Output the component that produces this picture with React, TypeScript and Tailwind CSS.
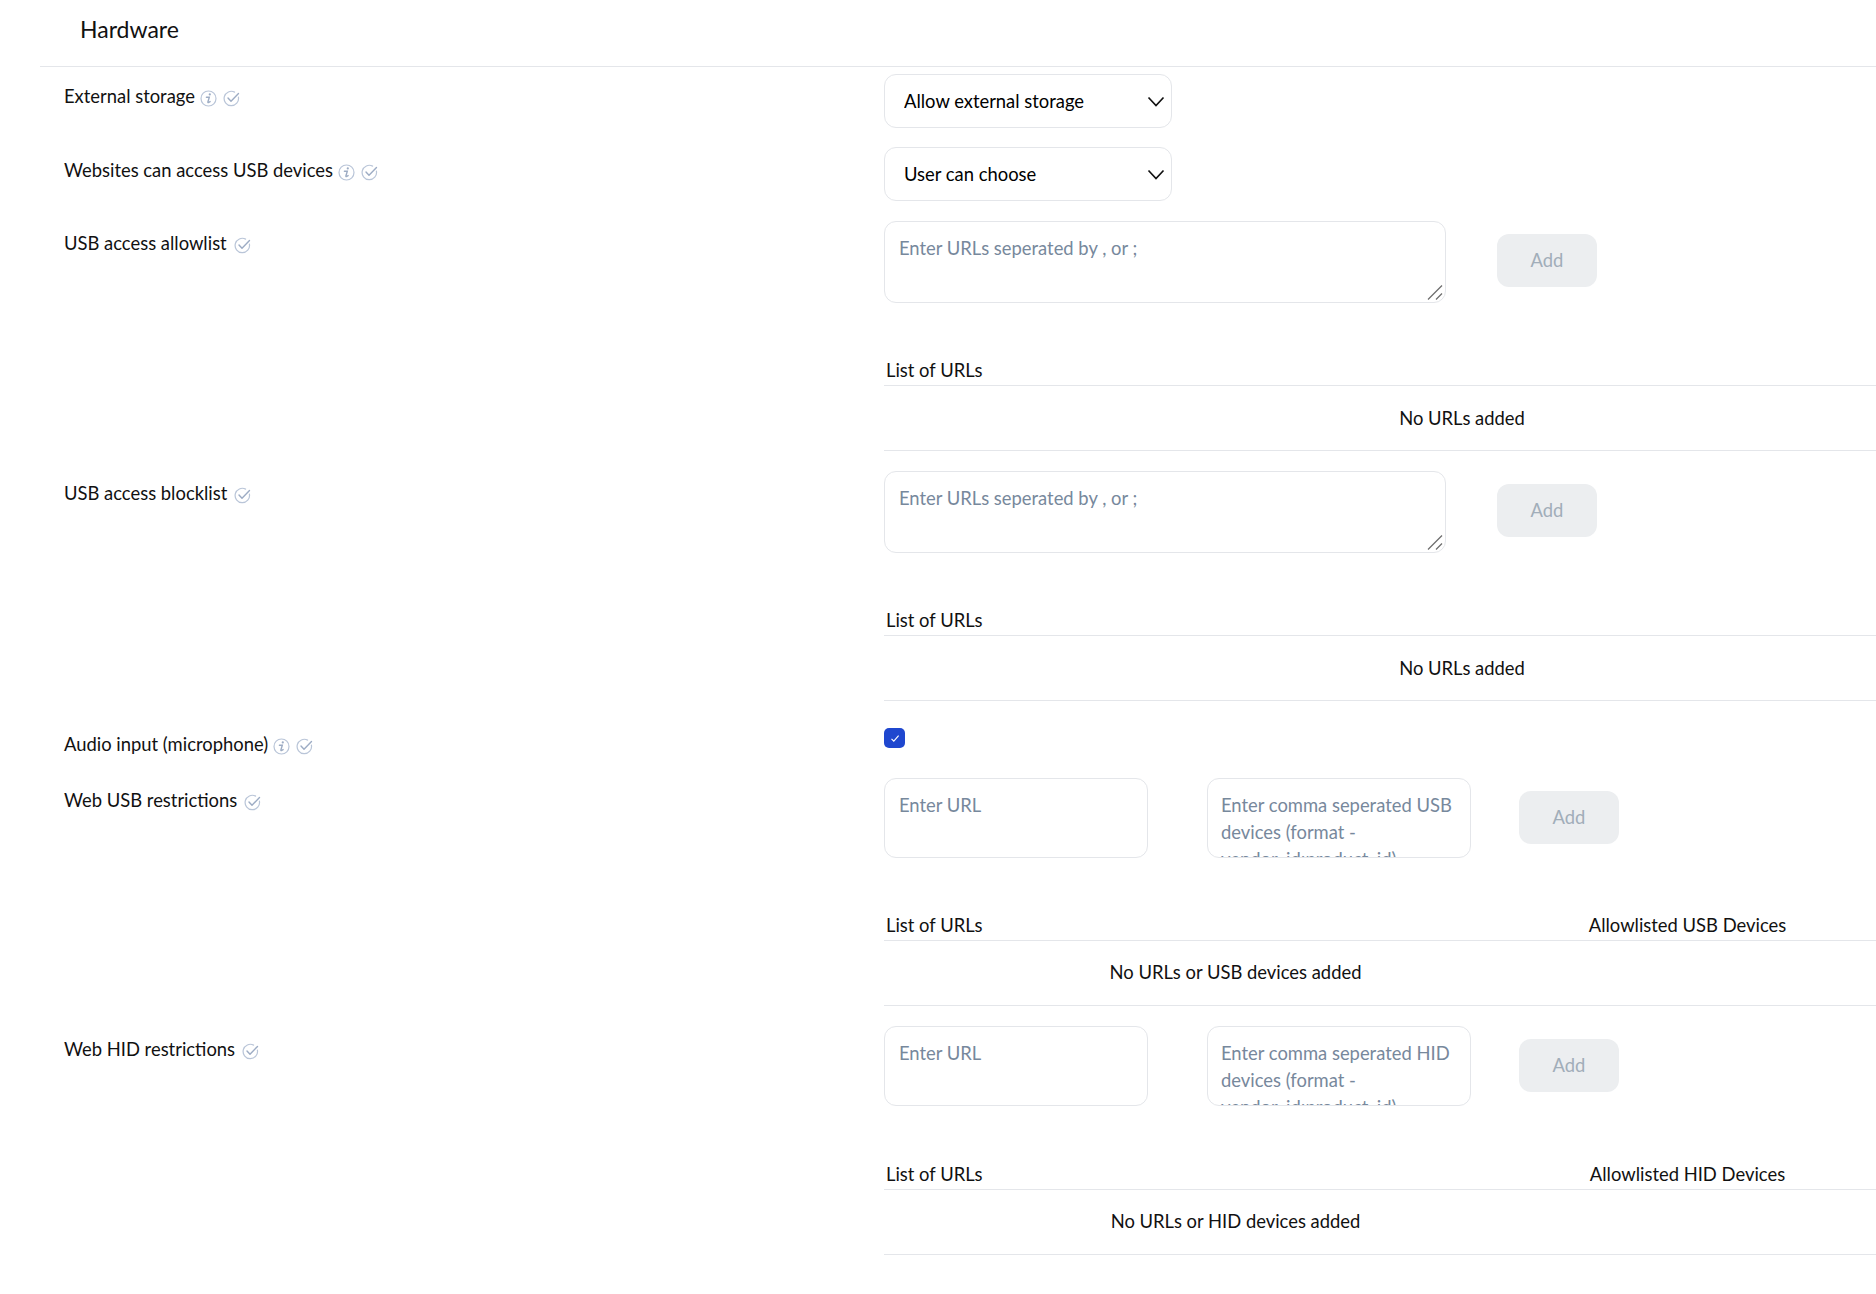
const inputCls =
  'block border border-[#e4e6ea] rounded-xl bg-white py-[13px] text-[18.4px] leading-[27px] text-black placeholder:text-[#77889c] outline-none resize-none';

function InfoIcon() {
  return (
    <svg width="17" height="17" viewBox="0 0 17 17" fill="none" className="inline-block shrink-0">
      <circle cx="8.5" cy="8.5" r="7.5" stroke="#b9c5d8" strokeWidth="1.2" />
      <circle cx="9.8" cy="4.4" r="1.1" fill="#9dacc4" />
      <path d="M6.4 7.2h2.9l-1.4 4.8c-.1.6.3.8.8.5l1.4-.9" stroke="#9dacc4" strokeWidth="1.4" strokeLinecap="round" />
    </svg>
  );
}

function CheckIcon() {
  return (
    <svg width="17" height="17" viewBox="0 0 17 17" fill="none" className="inline-block shrink-0">
      <path d="M15.4 7.2A7.2 7.2 0 1 1 11.6 2.1" stroke="#b9c5d8" strokeWidth="1.2" strokeLinecap="round" />
      <path d="M5 8l3 3.2 7.5-7.7" stroke="#9dacc4" strokeWidth="1.4" strokeLinecap="round" strokeLinejoin="round" />
    </svg>
  );
}

function Label({ text, info, className }: { text: string; info?: boolean; className: string }) {
  return (
    <div className={`w-[884px] shrink-0 pl-16 ${className}`}>
      <div className="flex items-center text-[18.4px] leading-[27px] text-[#111]">
        <span>{text}</span>
        {info && <span className="ml-[5px] flex items-center pt-[3px]"><InfoIcon /></span>}
        <span className={`${info ? 'ml-[6px]' : 'ml-[7px]'} flex items-center pt-[3px]`}><CheckIcon /></span>
      </div>
    </div>
  );
}

function Select({ value }: { value: string }) {
  return (
    <div className="relative w-[288px] h-[54px]">
      <select className="appearance-none w-full h-full border border-[#e4e6ea] rounded-xl bg-white pl-[19px] pt-[1px] text-[18.4px] text-black outline-none" defaultValue={value}>
        <option>{value}</option>
      </select>
      <svg width="18" height="11" viewBox="0 0 18 11" fill="none" className="absolute right-[7px] top-[22px] pointer-events-none">
        <path d="M1.5 1.5L9 9.5l7.5-8" stroke="#111" strokeWidth="1.7" />
      </svg>
    </div>
  );
}

function AddButton({ className }: { className: string }) {
  return (
    <button disabled className={`w-[100px] h-[53px] rounded-xl bg-[#eceef0] pt-[1px] text-[18.4px] text-[#a1adb9] ${className}`}>
      Add
    </button>
  );
}

function UrlTable() {
  return (
    <div className="w-[1156px] mt-[47px]">
      <div className="h-[36px] border-b border-[#e4e6ea] pl-[2px] text-[18.4px] leading-[27px] text-[#111] pt-[7px]">List of URLs</div>
      <div className="h-[65px] border-b border-[#e4e6ea] flex items-center justify-center pt-[2px] text-[18.4px] text-[#111]">No URLs added</div>
    </div>
  );
}

function DeviceTable({ heading, empty, className }: { heading: string; empty: string; className: string }) {
  return (
    <div className={`w-[1156px] ${className}`}>
      <div className="h-[35px] border-b border-[#e4e6ea] flex text-[18.4px] leading-[27px] text-[#111] pt-[6px]">
        <div className="w-[703px] pl-[2px]">List of URLs</div>
        <div className="w-[201px] text-center whitespace-nowrap">{heading}</div>
      </div>
      <div className="h-[65px] border-b border-[#e4e6ea] flex text-[18.4px] text-[#111]">
        <div className="w-[703px] flex items-center justify-center">{empty}</div>
      </div>
    </div>
  );
}

function UrlRow({ text, className }: { text: string; className: string }) {
  return (
    <div className={`flex ${className}`}>
      <Label text={text} className="pt-[9px]" />
      <div>
        <div className="flex items-start">
          <div className="relative">
            <textarea placeholder="Enter URLs seperated by , or ;" className={`${inputCls} px-[14px] w-[562px] h-[82px]`} />
            <svg width="18" height="18" viewBox="0 0 18 18" fill="none" className="absolute right-[2px] bottom-[2px] pointer-events-none">
              <path d="M2 16.5L16 2.5M10 16.5l6-6" stroke="#6f6f6f" strokeWidth="1.3" />
            </svg>
          </div>
          <AddButton className="ml-[51px] mt-[13px]" />
        </div>
        <UrlTable />
      </div>
    </div>
  );
}

function DeviceRow({ text, placeholder, heading, empty, labelClass, tableClass, className }: { text: string; placeholder: string; heading: string; empty: string; labelClass: string; tableClass: string; className: string }) {
  return (
    <div className={`flex ${className}`}>
      <Label text={text} className={labelClass} />
      <div>
        <div className="flex items-start">
          <textarea placeholder="Enter URL" className={`${inputCls} px-[14px] w-[264px] h-[80px]`} />
          <textarea placeholder={placeholder} className={`${inputCls} px-[13px] w-[264px] h-[80px] ml-[59px] overflow-hidden`} />
          <AddButton className="ml-[48px] mt-[13px]" />
        </div>
        <DeviceTable heading={heading} empty={empty} className={tableClass} />
      </div>
    </div>
  );
}

export default function App() {
  return (
    <div className="w-[1876px] h-[1294px] overflow-hidden bg-white font-['Lato','Liberation_Sans',sans-serif]">
      <div className="ml-10 h-[67px] border-b border-[#e4e6ea] pl-10 pt-[13px] text-[23px] leading-[33px] text-[#111]">Hardware</div>

      <div className="flex mt-[7px]">
        <Label text="External storage" info className="pt-[9px]" />
        <Select value="Allow external storage" />
      </div>
      <div className="flex mt-[19px]">
        <Label text="Websites can access USB devices" info className="pt-[10px]" />
        <Select value="User can choose" />
      </div>

      <UrlRow text="USB access allowlist" className="mt-[20px]" />
      <UrlRow text="USB access blocklist" className="mt-[20px]" />

      <div className="flex mt-[27px]">
        <Label text="Audio input (microphone)" info className="pt-[3px]" />
        <span className="w-[21px] h-[20px] rounded-[5px] bg-[#1f47cf] flex items-center justify-center">
          <svg width="10" height="9" viewBox="0 0 10 9" fill="none">
            <path d="M1.5 4.8l2.3 2.4L8.6 1.6" stroke="#fff" strokeWidth="1.1" />
          </svg>
        </span>
      </div>

      <DeviceRow
        text="Web USB restrictions"
        placeholder="Enter comma seperated USB devices (format - vendor_id:product_id)"
        heading="Allowlisted USB Devices"
        empty="No URLs or USB devices added"
        labelClass="pt-[9px]"
        tableClass="mt-[48px]"
        className="mt-[20px]"
      />
      <DeviceRow
        text="Web HID restrictions"
        placeholder="Enter comma seperated HID devices (format - vendor_id:product_id)"
        heading="Allowlisted HID Devices"
        empty="No URLs or HID devices added"
        labelClass="pt-[10px]"
        tableClass="mt-[49px]"
        className="mt-[20px]"
      />
    </div>
  );
}
